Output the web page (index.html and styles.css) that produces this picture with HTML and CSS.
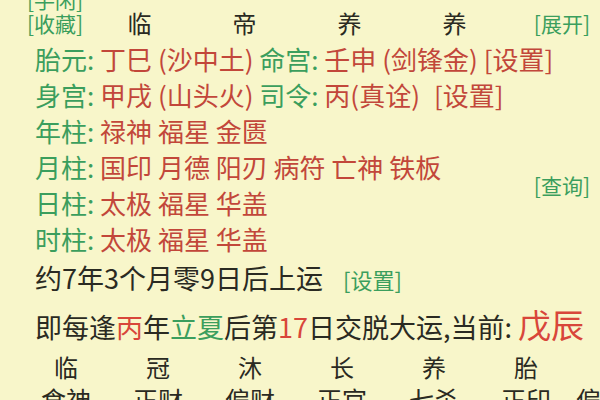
FILE: index.html
```html
<!DOCTYPE html>
<html lang="zh-CN">
<head>
<meta charset="utf-8">
<link rel="stylesheet" href="styles.css">
</head>
<body>
<div class="page">
  <div class="hdr">
    <div class="hdr-left">
      <div class="g">[手闲]</div>
      <div class="g">[收藏]</div>
    </div>
    <div class="hdr-cols">
      <span>临</span><span>帝</span><span>养</span><span>养</span>
    </div>
    <div class="g hdr-right">[展开]</div>
  </div>

  <div class="info">
    <div class="row"><span class="g">胎元:</span> <span class="r">丁巳 (沙中土)</span> <span class="g">命宫:</span> <span class="r">壬申 (剑锋金)</span><span class="r set">[设置]</span></div>
    <div class="row"><span class="g">身宫:</span> <span class="r">甲戌 (山头火)</span> <span class="g">司令:</span> <span class="r">丙(真诠)</span><span class="r set set2">[设置]</span></div>
    <div class="pillars">
      <div class="plist">
        <div class="row"><span class="g">年柱:</span> <span class="r">禄神 福星 金匮</span></div>
        <div class="row"><span class="g">月柱:</span> <span class="r">国印 月德 阳刃 病符 亡神 铁板</span></div>
        <div class="row"><span class="g">日柱:</span> <span class="r">太极 福星 华盖</span></div>
        <div class="row"><span class="g">时柱:</span> <span class="r">太极 福星 华盖</span></div>
      </div>
      <div class="g query">[查询]</div>
    </div>
  </div>

  <div class="yun">约7年3个月零9日后上运<span class="g small">[设置]</span></div>
  <div class="yun2">即每逢<span class="r2">丙</span>年<span class="g">立夏</span>后第<span class="r2">17</span>日交脱大运,当前: <span class="cur">戊辰</span></div>

  <div class="grid7 stages">
    <span>临</span><span>冠</span><span>沐</span><span>长</span><span>养</span><span>胎</span><span></span>
  </div>
  <div class="grid7 gods">
    <span>食神</span><span>正财</span><span>偏财</span><span>正官</span><span>七杀</span><span>正印</span><span>偏财</span>
  </div>
</div>
</body>
</html>
```

FILE: styles.css
```css
html, body {
  margin: 0;
  padding: 0;
  background: #f8f6ca;
}
.page {
  font-family: "Noto Sans CJK SC", "Noto Sans", sans-serif;
  color: #2a2a22;
  width: 600px;
  height: 413px;
  margin-top: -13px;
  overflow: hidden;
}
.g { color: #3b9e5d; }
.r { color: #c2473a; }
.r2 { color: #d8463a; }

.hdr {
  display: flex;
  align-items: flex-end;
  padding: 0 10px 0 27px;
  font-size: 21px;
  line-height: 24px;
}
.hdr-left { width: 60px; }
.hdr-cols {
  display: grid;
  grid-template-columns: repeat(4, 105px);
  text-align: center;
  font-size: 24px;
}
.hdr-right { margin-left: auto; }

.info {
  padding-left: 35px;
  padding-right: 10px;
  margin-top: 6px;
  font-size: 26px;
  line-height: 36px;
}
.row { white-space: nowrap; }
.set { margin-left: 6px; }
.set2 { margin-left: 14px; }
.pillars {
  display: flex;
  align-items: center;
}
.plist { flex: 1; }
.query {
  font-size: 21px;
}

.yun {
  padding-left: 35px;
  margin-top: 3px;
  font-size: 27px;
  line-height: 36px;
  white-space: nowrap;
}
.small {
  font-size: 22px;
  margin-left: 20px;
}
.yun2 {
  padding-left: 35px;
  margin-top: 9px;
  font-size: 27px;
  line-height: 36px;
  white-space: nowrap;
}
.cur {
  color: #d8463a;
  font-size: 33px;
}
.grid7 {
  display: grid;
  grid-template-columns: repeat(6, 92px) 28px;
  padding-left: 20px;
  text-align: center;
  font-size: 24px;
  white-space: nowrap;
  overflow: hidden;
}
.stages { margin-top: 6px; line-height: 32px; }
.gods { line-height: 32px; font-size: 25px; }
.gods span:last-child { text-align: left; padding-left: 4px; }
```
